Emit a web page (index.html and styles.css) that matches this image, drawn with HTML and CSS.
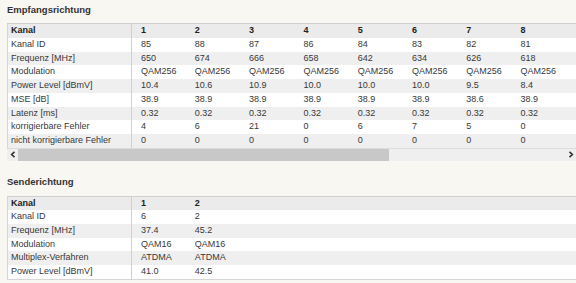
FILE: index.html
```html
<!DOCTYPE html>
<html lang="de">
<head>
<meta charset="utf-8">
<title>Kanäle</title>
<link rel="stylesheet" href="styles.css">
</head>
<body>
<main class="page">
  <section class="block">
    <h2 class="title">Empfangsrichtung</h2>
    <div class="scroller">
      <div class="clip">
        <table class="data wide">
          <colgroup><col class="c-label"><col class="c-val"><col class="c-val"><col class="c-val"><col class="c-val"><col class="c-val"><col class="c-val"><col class="c-val"><col class="c-val"><col class="c-val"></colgroup>
          <thead>
            <tr><th>Kanal</th><th>1</th><th>2</th><th>3</th><th>4</th><th>5</th><th>6</th><th>7</th><th>8</th><th></th></tr>
          </thead>
          <tbody>
            <tr><td>Kanal ID</td><td>85</td><td>88</td><td>87</td><td>86</td><td>84</td><td>83</td><td>82</td><td>81</td><td></td></tr>
            <tr><td>Frequenz [MHz]</td><td>650</td><td>674</td><td>666</td><td>658</td><td>642</td><td>634</td><td>626</td><td>618</td><td></td></tr>
            <tr><td>Modulation</td><td>QAM256</td><td>QAM256</td><td>QAM256</td><td>QAM256</td><td>QAM256</td><td>QAM256</td><td>QAM256</td><td>QAM256</td><td></td></tr>
            <tr><td>Power Level [dBmV]</td><td>10.4</td><td>10.6</td><td>10.9</td><td>10.0</td><td>10.0</td><td>10.0</td><td>9.5</td><td>8.4</td><td></td></tr>
            <tr><td>MSE [dB]</td><td>38.9</td><td>38.9</td><td>38.9</td><td>38.9</td><td>38.9</td><td>38.9</td><td>38.6</td><td>38.9</td><td></td></tr>
            <tr><td>Latenz [ms]</td><td>0.32</td><td>0.32</td><td>0.32</td><td>0.32</td><td>0.32</td><td>0.32</td><td>0.32</td><td>0.32</td><td></td></tr>
            <tr><td>korrigierbare Fehler</td><td>4</td><td>6</td><td>21</td><td>0</td><td>6</td><td>7</td><td>5</td><td>0</td><td></td></tr>
            <tr><td>nicht korrigierbare Fehler</td><td>0</td><td>0</td><td>0</td><td>0</td><td>0</td><td>0</td><td>0</td><td>0</td><td></td></tr>
          </tbody>
        </table>
      </div>
      <div class="hscroll">
        <span class="sbtn">
          <svg width="6" height="7" viewBox="0 0 6 7"><path d="M4.5 0.8 L1.6 3.5 L4.5 6.2" fill="none" stroke="#333" stroke-width="1.6"/></svg>
        </span>
        <div class="track"><div class="thumb"></div></div>
        <span class="sbtn">
          <svg width="6" height="7" viewBox="0 0 6 7"><path d="M1.5 0.8 L4.4 3.5 L1.5 6.2" fill="none" stroke="#333" stroke-width="1.6"/></svg>
        </span>
      </div>
    </div>
  </section>

  <section class="block second">
    <h2 class="title">Senderichtung</h2>
    <table class="data narrow">
      <colgroup><col class="c-label"><col class="c-val"><col class="c-val"><col class="c-rest"></colgroup>
      <thead>
        <tr><th>Kanal</th><th>1</th><th>2</th><th></th></tr>
      </thead>
      <tbody>
        <tr><td>Kanal ID</td><td>6</td><td>2</td><td></td></tr>
        <tr><td>Frequenz [MHz]</td><td>37.4</td><td>45.2</td><td></td></tr>
        <tr><td>Modulation</td><td>QAM16</td><td>QAM16</td><td></td></tr>
        <tr><td>Multiplex-Verfahren</td><td>ATDMA</td><td>ATDMA</td><td></td></tr>
        <tr><td>Power Level [dBmV]</td><td>41.0</td><td>42.5</td><td></td></tr>
      </tbody>
    </table>
  </section>
</main>
</body>
</html>
```

FILE: styles.css
```css
html, body {
  margin: 0;
  padding: 0;
  background: #f8f7f2;
  overflow: hidden;
}

.page {
  padding: 0 0 0 7px;
  font-family: "Liberation Sans", Arial, sans-serif;
  color: #333;
}

.title {
  margin: 0 0 3.3px 0;
  font-size: 9.5px;
  line-height: 20px;
  font-weight: bold;
  color: #333;
}

.second {
  margin-top: 11.7px;
}

.scroller {
  width: 569px;
}

.clip {
  overflow: hidden;
  width: 569px;
}

.data {
  border-collapse: collapse;
  table-layout: fixed;
  font-size: 9px;
  border-left: 1px solid #d6d6d6;
  border-top: 1px solid #cfcfcf;
}

.data.wide {
  width: 613px;
}

.data.narrow {
  width: 569px;
  border-bottom: 1px solid #d6d6d6;
}

.c-label { width: 124px; }
.c-val { width: 54.3px; }

.data th,
.data td {
  height: 13.7px;
  line-height: 13.7px;
  padding: 0 0 0 9px;
  text-align: left;
  white-space: nowrap;
  overflow: hidden;
  vertical-align: middle;
  color: #383838;
}

.data th:first-child,
.data td:first-child {
  padding-left: 3px;
  border-right: 1px solid #d0d0d0;
}

.data th {
  font-weight: bold;
  color: #222;
}

.data thead tr {
  background: #ebebeb;
}

.data tbody tr:nth-child(odd) {
  background: #ffffff;
}

.data tbody tr:nth-child(even) {
  background: #efefef;
}

.hscroll {
  display: flex;
  align-items: stretch;
  height: 12px;
  background: #efefef;
  border-top: 1px solid #dcdcdc;
}

.sbtn {
  width: 11px;
  display: flex;
  align-items: center;
  justify-content: center;
  flex: none;
}

.track {
  flex: 1;
  display: flex;
}

.thumb {
  width: 371px;
  background: #c8c8c8;
}
```
